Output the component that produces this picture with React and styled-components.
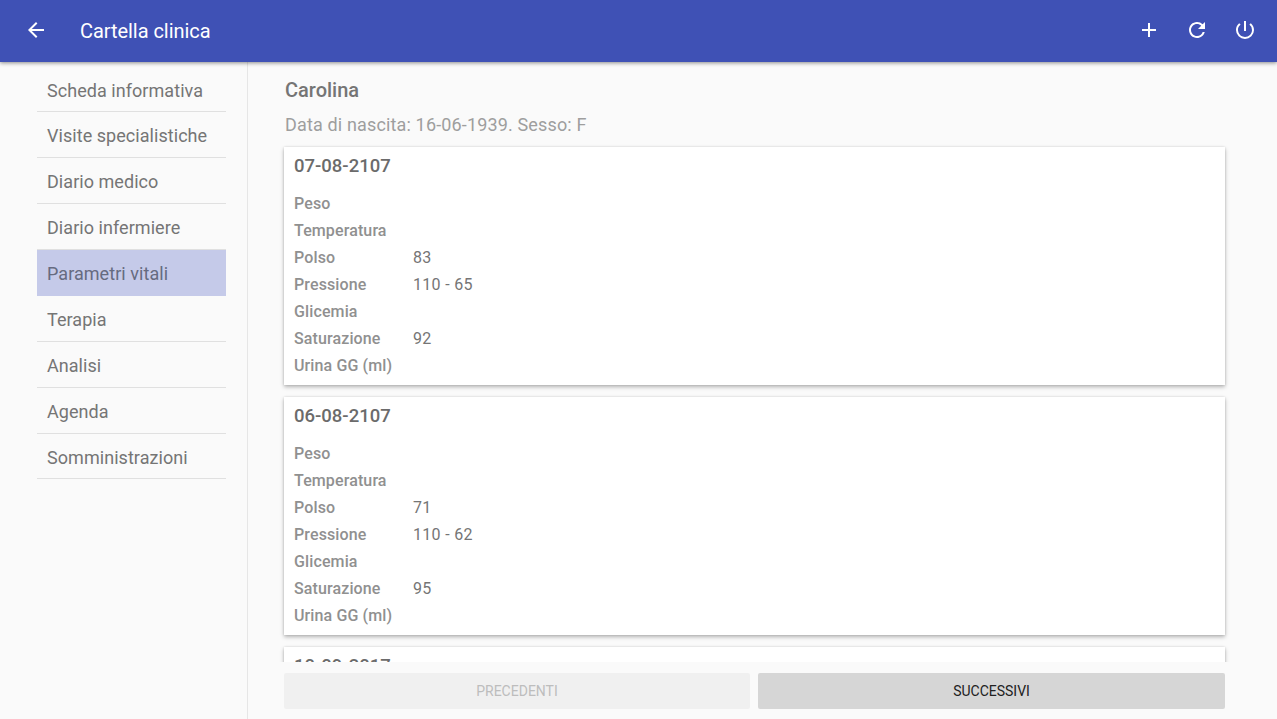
import React from "react";
import styled, { createGlobalStyle } from "styled-components";
import { MdAdd, MdArrowBack, MdPowerSettingsNew, MdRefresh } from "react-icons/md";

const menu = [
  "Scheda informativa",
  "Visite specialistiche",
  "Diario medico",
  "Diario infermiere",
  "Parametri vitali",
  "Terapia",
  "Analisi",
  "Agenda",
  "Somministrazioni",
];

const visits = [
  { date: "07-08-2107", polso: "83", pressione: "110 - 65", saturazione: "92" },
  { date: "06-08-2107", polso: "71", pressione: "110 - 62", saturazione: "95" },
  { date: "10-09-2017" },
];

const GlobalStyle = createGlobalStyle`
  html, body {
    margin: 0;
    height: 100%;
    overflow: hidden;
    background: #fafafa;
    font-family: Roboto, "Liberation Sans", sans-serif;
  }
`;

const Page = styled.div`
  height: 100vh;
  display: flex;
  flex-direction: column;
`;

const Toolbar = styled.header`
  z-index: 2;
  flex: 0 0 62px;
  display: flex;
  align-items: center;
  padding: 0 20px 2px 24px;
  box-sizing: border-box;
  background: #3f51b5;
  color: #fff;
  box-shadow: 0 1px 4px rgba(0, 0, 0, 0.45);
`;

const ToolbarTitle = styled.h1`
  flex: 1;
  margin: 2px 0 0 32px;
  font-size: 20px;
  font-weight: 400;
  letter-spacing: -0.05px;
`;

const IconButton = styled.span`
  display: flex;
  width: 24px;
  height: 24px;
  font-size: 24px;
  margin-left: ${(p) => (p.$first ? 0 : "24px")};
`;

const Body = styled.div`
  flex: 1;
  min-height: 0;
  display: flex;
`;

const Sidebar = styled.nav`
  flex: 0 0 248px;
  box-sizing: border-box;
  padding: 4.6px 21px 0 37px;
  border-right: 1px solid #e6e6e6;
`;

const MenuItem = styled.div`
  box-sizing: border-box;
  height: 45.875px;
  line-height: 47px;
  padding-left: 10px;
  font-size: 18px;
  letter-spacing: 0.05px;
  color: ${(p) => (p.$active ? "#666b80" : "#757575")};
  border-bottom: 1px solid ${(p) => (p.$active ? "#c5cae9" : "#e0e0e0")};
  background: ${(p) => (p.$active ? "#c5cae9" : "transparent")};
`;

const Content = styled.main`
  flex: 1;
  min-width: 0;
  display: flex;
  flex-direction: column;
`;

const Scroller = styled.div`
  flex: 1;
  min-height: 0;
  overflow: hidden;
  padding: 0 52px 0 36px;
`;

const Name = styled.div`
  height: 54px;
  line-height: 56px;
  padding-left: 1px;
  font-size: 20px;
  font-weight: 500;
  color: #757575;
`;

const Birth = styled.div`
  height: 31px;
  padding-left: 1px;
  line-height: 18px;
  font-size: 18px;
  letter-spacing: 0.15px;
  color: #9e9e9e;
`;

const Card = styled.section`
  box-sizing: border-box;
  height: 238px;
  margin-bottom: 12px;
  padding: 6px 10px;
  background: #fff;
  box-shadow: 0 2px 4px rgba(0, 0, 0, 0.28), 0 0 2px rgba(0, 0, 0, 0.12);
`;

const CardDate = styled.div`
  height: 36px;
  line-height: 26px;
  font-size: 18.5px;
  font-weight: 500;
  color: #6b6b6b;
`;

const Row = styled.div`
  display: flex;
  height: 27px;
  line-height: 29px;
  font-size: 16px;
`;

const Label = styled.span`
  flex: 0 0 119px;
  font-weight: 500;
  letter-spacing: 0.12px;
  color: #909090;
`;

const Value = styled.span`
  letter-spacing: 0.3px;
  color: #757575;
`;

const Footer = styled.footer`
  z-index: 1;
  flex: 0 0 57px;
  box-sizing: border-box;
  display: grid;
  grid-template-columns: 466px 1fr;
  gap: 8px;
  padding: 11px 52px 10px 36px;
  background: #fafafa;
`;

const PageButton = styled.div`
  display: flex;
  align-items: center;
  justify-content: center;
  border-radius: 2px;
  font-size: 14px;
  background: ${(p) => (p.$disabled ? "#f0f0f0" : "#d6d6d6")};
  color: ${(p) => (p.$disabled ? "#bdbdbd" : "#212121")};
`;

const Visit = ({ visit }) => (
  <Card>
    <CardDate>{visit.date}</CardDate>
    <Row><Label>Peso</Label></Row>
    <Row><Label>Temperatura</Label></Row>
    <Row><Label>Polso</Label><Value>{visit.polso}</Value></Row>
    <Row><Label>Pressione</Label><Value>{visit.pressione}</Value></Row>
    <Row><Label>Glicemia</Label></Row>
    <Row><Label>Saturazione</Label><Value>{visit.saturazione}</Value></Row>
    <Row><Label>Urina GG (ml)</Label></Row>
  </Card>
);

export default function App() {
  return (
    <Page>
      <GlobalStyle />
      <Toolbar>
        <IconButton $first><MdArrowBack /></IconButton>
        <ToolbarTitle>Cartella clinica</ToolbarTitle>
        <IconButton $first><MdAdd /></IconButton>
        <IconButton><MdRefresh /></IconButton>
        <IconButton><MdPowerSettingsNew /></IconButton>
      </Toolbar>
      <Body>
        <Sidebar>
          {menu.map((item) => (
            <MenuItem key={item} $active={item === "Parametri vitali"}>{item}</MenuItem>
          ))}
        </Sidebar>
        <Content>
          <Scroller>
            <Name>Carolina</Name>
            <Birth>Data di nascita: 16-06-1939. Sesso: F</Birth>
            {visits.map((visit) => <Visit key={visit.date} visit={visit} />)}
          </Scroller>
          <Footer>
            <PageButton $disabled>PRECEDENTI</PageButton>
            <PageButton>SUCCESSIVI</PageButton>
          </Footer>
        </Content>
      </Body>
    </Page>
  );
}
